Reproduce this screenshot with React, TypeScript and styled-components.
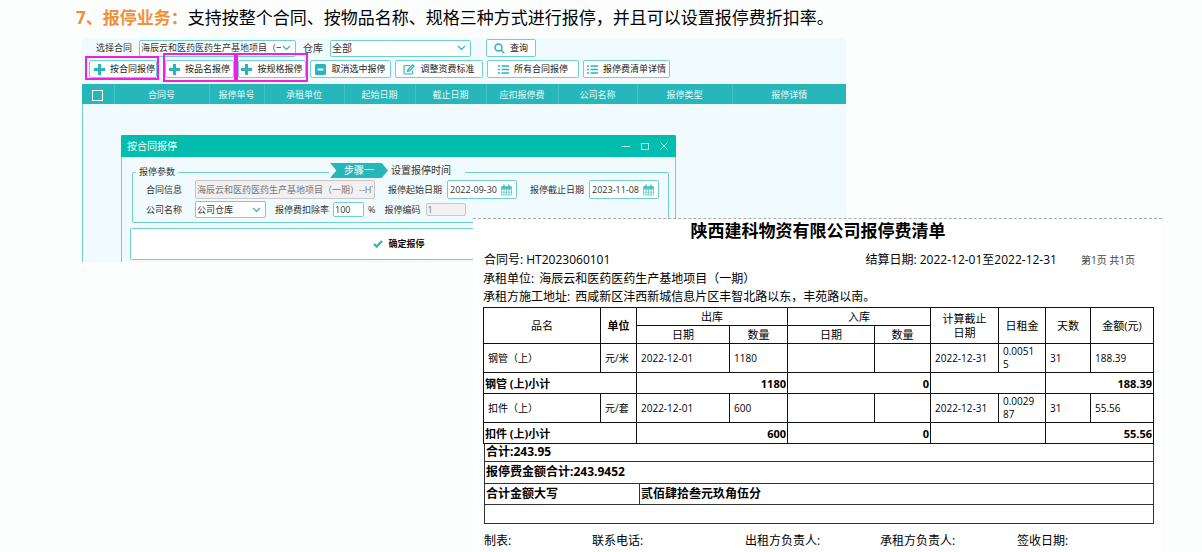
import React from "react";
import styled, { createGlobalStyle } from "styled-components";

const teal = "#27b6ba";
const line = "#6fd0cf";

const GlobalStyle = createGlobalStyle`
  *, *::before, *::after { box-sizing: border-box; }
  body {
    margin: 0;
    background: #fbfefd;
    color: #000;
    font-family: "Open Sans", "Noto Sans CJK SC", sans-serif;
  }
  button, input, select { font: inherit; color: inherit; margin: 0; }
`;

const Page = styled.main`
  padding: 0 40px 0 82px;
`;

const Heading = styled.h1`
  margin: 0 0 0 -6px;
  padding-top: 5px;
  height: 38px;
  font-size: 17px;
  line-height: 26px;
  font-weight: 400;
  white-space: nowrap;
  strong { color: #f0913a; font-weight: 700; }
`;

const Stage = styled.div`
  display: grid;
  align-items: start;
  > * { grid-area: 1 / 1; min-width: 0; }
`;

const Panel = styled.section`
  margin-right: 316px;
  background: #f1fafc;
  font-size: 9px;
  line-height: 14px;
  color: #333;
`;

const Tools = styled.div`
  height: 46px;
  padding: 1px 0 0 7px;
  white-space: nowrap;
`;

const Filters = styled.div`
  display: flex;
  align-items: center;
  height: 18px;
  padding-left: 7px;
  margin-bottom: 3px;
`;

const FilterLabel = styled.label<{ $large?: boolean }>`
  font-size: ${(p) => (p.$large ? 10 : 9)}px;
  margin: 0 7px 0 ${(p) => (p.$large ? 7 : 0)}px;
`;

const SelectBox = styled.span<{ $w: number; $large?: boolean }>`
  display: inline-grid;
  align-items: center;
  width: ${(p) => p.$w}px;
  height: 17px;
  border: 1px solid ${line};
  border-radius: 2px;
  background: #fff;
  font-size: ${(p) => (p.$large ? 10 : 9)}px;
  > * { grid-area: 1 / 1; }
  svg { justify-self: end; margin-right: 4px; pointer-events: none; }
`;

const Select = styled.select`
  appearance: none;
  width: 100%;
  height: 15px;
  padding: 0 14px 0 1px;
  border: 0;
  background: transparent;
  line-height: 14px;
`;

const Actions = styled.div`
  display: flex;
  align-items: center;
  gap: 4px;
  height: 18px;
`;

const ToolButton = styled.button<{ $w: number; $before?: number }>`
  display: inline-flex;
  align-items: center;
  justify-content: center;
  gap: 5px;
  width: ${(p) => p.$w}px;
  height: 18px;
  padding: 0;
  margin-left: ${(p) => p.$before ?? 0}px;
  border: 1px solid ${line};
  border-radius: 2px;
  background: #fff;
  color: #222;
  line-height: 14px;
  white-space: nowrap;
  svg { flex: none; }
`;

const Marked = styled.span<{ $tall?: boolean }>`
  position: relative;
  display: inline-flex;
  margin-right: ${(p) => (p.$tall ? 0 : 4)}px;
  button { padding-left: ${(p) => (p.$tall ? 0 : 3)}px; }
  &::after {
    content: "";
    position: absolute;
    inset: ${(p) => (p.$tall ? "-7px -2px -4px -2px" : "-4px -2px -2px -4px")};
    border: 2px solid #f01ee6;
    pointer-events: none;
  }
`;

const Grid = styled.table`
  width: 100%;
  table-layout: fixed;
  border-collapse: collapse;
  th {
    height: 20px;
    padding: 2px 0 0;
    background: ${teal};
    color: #e4fafa;
    font-weight: 400;
    border-right: 1px solid #42c2c4;
    line-height: 14px;
  }
  th:last-child { border-right: 0; }
`;

const HeadCheck = styled.input`
  appearance: none;
  display: block;
  width: 11px;
  height: 11px;
  margin: 0 auto;
  border: 1px solid #fff;
`;

const PanelBody = styled.div`
  padding: 31px 170px 0 38px;
  border-left: 1px solid ${line};
`;

const Dialog = styled.section`
  border: 1px solid ${line};
  border-top: 0;
  border-bottom: 0;
  padding-bottom: 2px;
`;

const TitleBar = styled.header`
  display: flex;
  align-items: center;
  justify-content: space-between;
  height: 22px;
  margin: 0 -1px;
  padding: 0 7px 0 6px;
  border-radius: 2px 2px 0 0;
  background: #00bdae;
  color: #fff;
  h2 { margin: 0; font-size: 10px; font-weight: 400; }
`;

const WindowButtons = styled.div`
  display: flex;
  gap: 9px;
`;

const WindowButton = styled.button`
  display: flex;
  padding: 0;
  border: 0;
  background: none;
  color: #b5f0ea;
`;

const Params = styled.fieldset`
  position: relative;
  min-width: 0;
  margin: 8px 6px 5px 10px;
  padding: 1px 0 3px 13px;
  border: 1px solid ${line};
  border-radius: 2px;
  white-space: nowrap;
  legend {
    padding: 0 3px;
    margin-left: -10px;
    height: 14px;
    line-height: 14px;
  }
`;

const Step = styled.div`
  position: absolute;
  top: -16px;
  left: 196px;
  display: flex;
  align-items: center;
  gap: 3px;
  width: 136px;
  height: 15px;
  padding-left: 1px;
  background: #f1fafc;
  font-size: 10px;
  line-height: 15px;
`;

const StepTag = styled.span`
  width: 58px;
  text-align: center;
  color: #fff;
  background: ${teal};
  clip-path: polygon(0 0, 89% 0, 100% 50%, 89% 100%, 0 100%, 11% 50%);
`;

const FieldRow = styled.div`
  display: flex;
  align-items: center;
  height: 19px;
  & + & { margin-top: 1px; }
`;

const FieldLabel = styled.label<{ $before?: number; $gap?: number }>`
  margin: 0 ${(p) => p.$gap ?? 5}px 0 ${(p) => p.$before ?? 0}px;
`;

const TextInput = styled.input<{ $w: number; $h?: number }>`
  width: ${(p) => p.$w}px;
  height: ${(p) => p.$h ?? 19}px;
  padding: 0 1px;
  border: 1px solid ${line};
  border-radius: 2px;
  background: #fff;
  &:disabled { background: #f1f1f1; border-color: #c8c8c8; color: #777; }
`;

const DateBox = styled.span`
  display: inline-flex;
  align-items: center;
  width: 70px;
  height: 19px;
  padding-right: 4px;
  border: 1px solid ${line};
  border-radius: 2px;
  background: #fff;
  input { width: 100%; min-width: 0; height: 15px; padding: 0 0 0 2px; border: 0; background: none; }
  svg { flex: none; }
`;

const Confirm = styled.button`
  display: flex;
  align-items: center;
  justify-content: center;
  gap: 5px;
  width: calc(100% - 15px);
  height: 32px;
  margin: 0 7px 0 8px;
  border: 1px solid ${line};
  border-radius: 2px;
  background: #fff;
  color: #111;
  font-weight: 700;
`;

const Sheet = styled.article`
  position: relative;
  margin: 180px 0 0 391px;
  padding: 0 9px 0 10px;
  border-top: 1px dashed #aaa;
  background: #fff;
  font-size: 12px;
  line-height: 18px;
  white-space: nowrap;
`;

const SheetTitle = styled.h2`
  margin: 0;
  font-size: 17px;
  line-height: 24px;
  text-align: center;
`;

const Meta = styled.div`
  display: flex;
  align-items: center;
  padding: 8px 18px 1px 1px;
`;

const Period = styled.span`
  margin-left: auto;
  margin-right: 24px;
`;

const PageNo = styled.span`
  font-size: 10px;
  color: #444;
`;

const MetaLine = styled.div`
  display: flex;
  gap: 5px;
`;

const Bill = styled.table`
  width: 100%;
  margin-top: 1px;
  table-layout: fixed;
  border-collapse: collapse;
  font-size: 10px;
  line-height: 13px;
  th, td { border: 1px solid #111; padding: 0 4px; text-align: left; }
  thead th { height: 18px; padding: 0; font-size: 11px; font-weight: 400; line-height: 14px; text-align: center; }
  thead th.strong { font-weight: 700; }
`;

const ItemRow = styled.tr`
  height: 29px;
  && td.wrap { white-space: normal; word-break: break-all; padding-right: 8px; }
`;

const SubtotalRow = styled.tr`
  height: 21px;
  font-size: 11px;
  font-weight: 700;
  && th, && td { padding: 0 1px; }
  && td { text-align: right; }
`;

const Totals = styled.table`
  width: 100%;
  margin-left: 1px;
  table-layout: fixed;
  border-collapse: collapse;
  font-weight: 700;
  td { border: 1px solid #333; border-top: 0; padding: 0 1px; }
`;

const TotalRow = styled.tr<{ $h: number }>`
  height: ${(p) => p.$h}px;
  line-height: 16px;
`;

const SignRow = styled.footer`
  display: grid;
  grid-template-columns: 108fr 153fr 135fr 137fr 136fr;
  padding: 8px 0 2px 1px;
`;

const Chevron = () => (
  <svg width="9" height="6" viewBox="0 0 9 6" fill="none" stroke={teal} strokeWidth="1.2"><path d="M1 1l3.5 3.5L8 1" /></svg>
);
const Plus = () => (
  <svg width="11" height="11" viewBox="0 0 11 11" fill={teal}><path d="M4 0h3v4h4v3H7v4H4V7H0V4h4z" /></svg>
);
const Minus = () => (
  <svg width="11" height="11" viewBox="0 0 11 11"><rect width="11" height="11" rx="1.5" fill={teal} /><path d="M2.5 5.5h6" stroke="#fff" strokeWidth="2" /></svg>
);
const Edit = () => (
  <svg width="12" height="11" viewBox="0 0 12 11" fill="none" stroke={teal} strokeWidth="1.1"><path d="M7 1.5H2.2Q1 1.5 1 2.7v6Q1 10 2.2 10h6q1.3 0 1.3-1.3V6.5" /><path d="M4.5 7.5l.5-2L9.7.8l1.5 1.5L6.5 7z" fill="#b9e8e8" /></svg>
);
const ListIcon = () => (
  <svg width="11" height="9" viewBox="0 0 11 9" stroke={teal} strokeWidth="1.3"><path d="M0 1h2M3.5 1H11M0 4.5h2M3.5 4.5H11M0 8h2M3.5 8H11" /></svg>
);
const Search = () => (
  <svg width="11" height="11" viewBox="0 0 11 11" fill="none" stroke={teal} strokeWidth="1.5"><circle cx="4.5" cy="4.5" r="3.5" /><path d="M7 7l3.3 3.3" /></svg>
);
const Calendar = () => (
  <svg width="11" height="12" viewBox="0 0 11 12"><path d="M.5 2.5h10v8.500H.5zM.5 5.3h10M.5 8.2h10M3 5v6M5.5 5v6M8 5v6" fill="none" stroke="#5fc9c5" strokeWidth=".8" /><path d="M.5 2.5h10V5H.5z" fill="#4fc4c0" /><path d="M3 .5v3M8 .5v3" stroke="#37b9b5" strokeWidth="1.3" /></svg>
);
const Check = () => (
  <svg width="10" height="8" viewBox="0 0 10 8" fill="none" stroke={teal} strokeWidth="2.2"><path d="M1 4l2.7 2.6L9 1" /></svg>
);

const columns: [string, number][] = [
  ["合同号", 95], ["报停单号", 55], ["承租单位", 80], ["起始日期", 71], ["截止日期", 71],
  ["应扣报停费", 72], ["公司名称", 79], ["报停类型", 95], ["报停详情", 114],
];
const billWidths = [117, 36, 93, 58, 87, 56, 68, 47, 45, 63];
const items = [
  { name: "钢管（上）", sub: "钢管 (上)小计", unit: "元/米", qty: "1180", rent: "0.00515", amount: "188.39" },
  { name: "扣件（上）", sub: "扣件 (上)小计", unit: "元/套", qty: "600", rent: "0.002987", amount: "55.56" },
];

export default function App() {
  return (
    <Page>
      <GlobalStyle />
      <Heading><strong>7、报停业务：</strong>支持按整个合同、按物品名称、规格三种方式进行报停，并且可以设置报停费折扣率。</Heading>
      <Stage>
        <Panel>
          <Tools>
            <Filters>
              <FilterLabel htmlFor="contract">选择合同</FilterLabel>
              <SelectBox $w={157}>
                <Select id="contract"><option>海辰云和医药医药生产基地项目（一期）</option></Select>
                <Chevron />
              </SelectBox>
              <FilterLabel htmlFor="store" $large>仓库</FilterLabel>
              <SelectBox $w={141} $large>
                <Select id="store"><option>全部</option></Select>
                <Chevron />
              </SelectBox>
              <ToolButton $w={50} $before={15}><Search />查询</ToolButton>
            </Filters>
            <Actions>
              <Marked><ToolButton $w={68}><Plus />按合同报停</ToolButton></Marked>
              <Marked $tall><ToolButton $w={69}><Plus />按品名报停</ToolButton></Marked>
              <Marked $tall><ToolButton $w={68}><Plus />按规格报停</ToolButton></Marked>
              <ToolButton $w={81}><Minus />取消选中报停</ToolButton>
              <ToolButton $w={88}><Edit />调整资费标准</ToolButton>
              <ToolButton $w={92}><ListIcon />所有合同报停</ToolButton>
              <ToolButton $w={87}><ListIcon />报停费清单详情</ToolButton>
            </Actions>
          </Tools>
          <Grid>
            <colgroup>
              <col style={{ width: 32 }} />
              {columns.map(([name, w]) => <col key={name} style={{ width: w }} />)}
            </colgroup>
            <thead>
              <tr>
                <th><HeadCheck type="checkbox" aria-label="全选" /></th>
                {columns.map(([name]) => <th key={name}>{name}</th>)}
              </tr>
            </thead>
          </Grid>
          <PanelBody>
            <Dialog>
              <TitleBar>
                <h2>按合同报停</h2>
                <WindowButtons>
                  <WindowButton aria-label="最小化"><svg width="10" height="10" stroke="currentColor"><path d="M1 5.5h8" /></svg></WindowButton>
                  <WindowButton aria-label="最大化"><svg width="10" height="10" fill="none" stroke="currentColor"><rect x="1.5" y="2.5" width="7" height="6" /></svg></WindowButton>
                  <WindowButton aria-label="关闭"><svg width="10" height="10" stroke="currentColor"><path d="M1.5 1.5l7 7M8.5 1.5l-7 7" /></svg></WindowButton>
                </WindowButtons>
              </TitleBar>
              <Params>
                <legend>报停参数</legend>
                <Step><StepTag>步骤一</StepTag>设置报停时间</Step>
                <FieldRow>
                  <FieldLabel htmlFor="info" $gap={13}>合同信息</FieldLabel>
                  <TextInput id="info" $w={180} disabled defaultValue="海辰云和医药医药生产基地项目（一期）--HT2023060101" />
                  <FieldLabel htmlFor="from" $before={13}>报停起始日期</FieldLabel>
                  <DateBox><input id="from" defaultValue="2022-09-30" /><Calendar /></DateBox>
                  <FieldLabel htmlFor="to" $before={13}>报停截止日期</FieldLabel>
                  <DateBox><input id="to" defaultValue="2023-11-08" /><Calendar /></DateBox>
                </FieldRow>
                <FieldRow>
                  <FieldLabel htmlFor="company" $gap={13}>公司名称</FieldLabel>
                  <SelectBox $w={71}>
                    <Select id="company"><option>公司仓库</option></Select>
                    <Chevron />
                  </SelectBox>
                  <FieldLabel htmlFor="rate" $before={9} $gap={4}>报停费扣除率</FieldLabel>
                  <TextInput id="rate" $w={31} $h={15} defaultValue="100" />
                  <FieldLabel htmlFor="rate" $before={4} $gap={9}>%</FieldLabel>
                  <FieldLabel htmlFor="code">报停编码</FieldLabel>
                  <TextInput id="code" $w={40} $h={13} disabled defaultValue="1" />
                </FieldRow>
              </Params>
              <Confirm><Check />确定报停</Confirm>
            </Dialog>
          </PanelBody>
        </Panel>

        <Sheet>
          <SheetTitle>陕西建科物资有限公司报停费清单</SheetTitle>
          <Meta>
            <span>合同号: HT2023060101</span>
            <Period>结算日期: 2022-12-01至2022-12-31</Period>
            <PageNo>第1页 共1页</PageNo>
          </Meta>
          <MetaLine><span>承租单位:</span><span>海辰云和医药医药生产基地项目（一期）</span></MetaLine>
          <MetaLine><span>承租方施工地址:</span><span>西咸新区沣西新城信息片区丰智北路以东，丰苑路以南。</span></MetaLine>
          <Bill>
            <colgroup>{billWidths.map((w, i) => <col key={i} style={{ width: w }} />)}</colgroup>
            <thead>
              <tr>
                <th rowSpan={2}>品名</th>
                <th rowSpan={2} className="strong">单位</th>
                <th colSpan={2}>出库</th>
                <th colSpan={2}>入库</th>
                <th rowSpan={2}>计算截止<br />日期</th>
                <th rowSpan={2}>日租金</th>
                <th rowSpan={2}>天数</th>
                <th rowSpan={2}>金额(元)</th>
              </tr>
              <tr><th>日期</th><th>数量</th><th>日期</th><th>数量</th></tr>
            </thead>
            <tbody>
              {items.map((it) => (
                <React.Fragment key={it.name}>
                  <ItemRow>
                    <td>{it.name}</td>
                    <td>{it.unit}</td>
                    <td>2022-12-01</td>
                    <td>{it.qty}</td>
                    <td />
                    <td />
                    <td>2022-12-31</td>
                    <td className="wrap">{it.rent}</td>
                    <td>31</td>
                    <td>{it.amount}</td>
                  </ItemRow>
                  <SubtotalRow>
                    <th colSpan={2}>{it.sub}</th>
                    <td colSpan={2}>{it.qty}</td>
                    <td colSpan={2}>0</td>
                    <td colSpan={2} />
                    <td colSpan={2}>{it.amount}</td>
                  </SubtotalRow>
                </React.Fragment>
              ))}
            </tbody>
          </Bill>
          <Totals>
            <colgroup><col style={{ width: 155 }} /><col /></colgroup>
            <tbody>
              <TotalRow $h={17}><td colSpan={2}>合计:243.95</td></TotalRow>
              <TotalRow $h={22}><td colSpan={2}>报停费金额合计:243.9452</td></TotalRow>
              <TotalRow $h={21}><td>合计金额大写</td><td>贰佰肆拾叁元玖角伍分</td></TotalRow>
              <TotalRow $h={19}><td colSpan={2} /></TotalRow>
            </tbody>
          </Totals>
          <SignRow>
            <span>制表:</span>
            <span>联系电话:</span>
            <span>出租方负责人:</span>
            <span>承租方负责人:</span>
            <span>签收日期:</span>
          </SignRow>
        </Sheet>
      </Stage>
    </Page>
  );
}
